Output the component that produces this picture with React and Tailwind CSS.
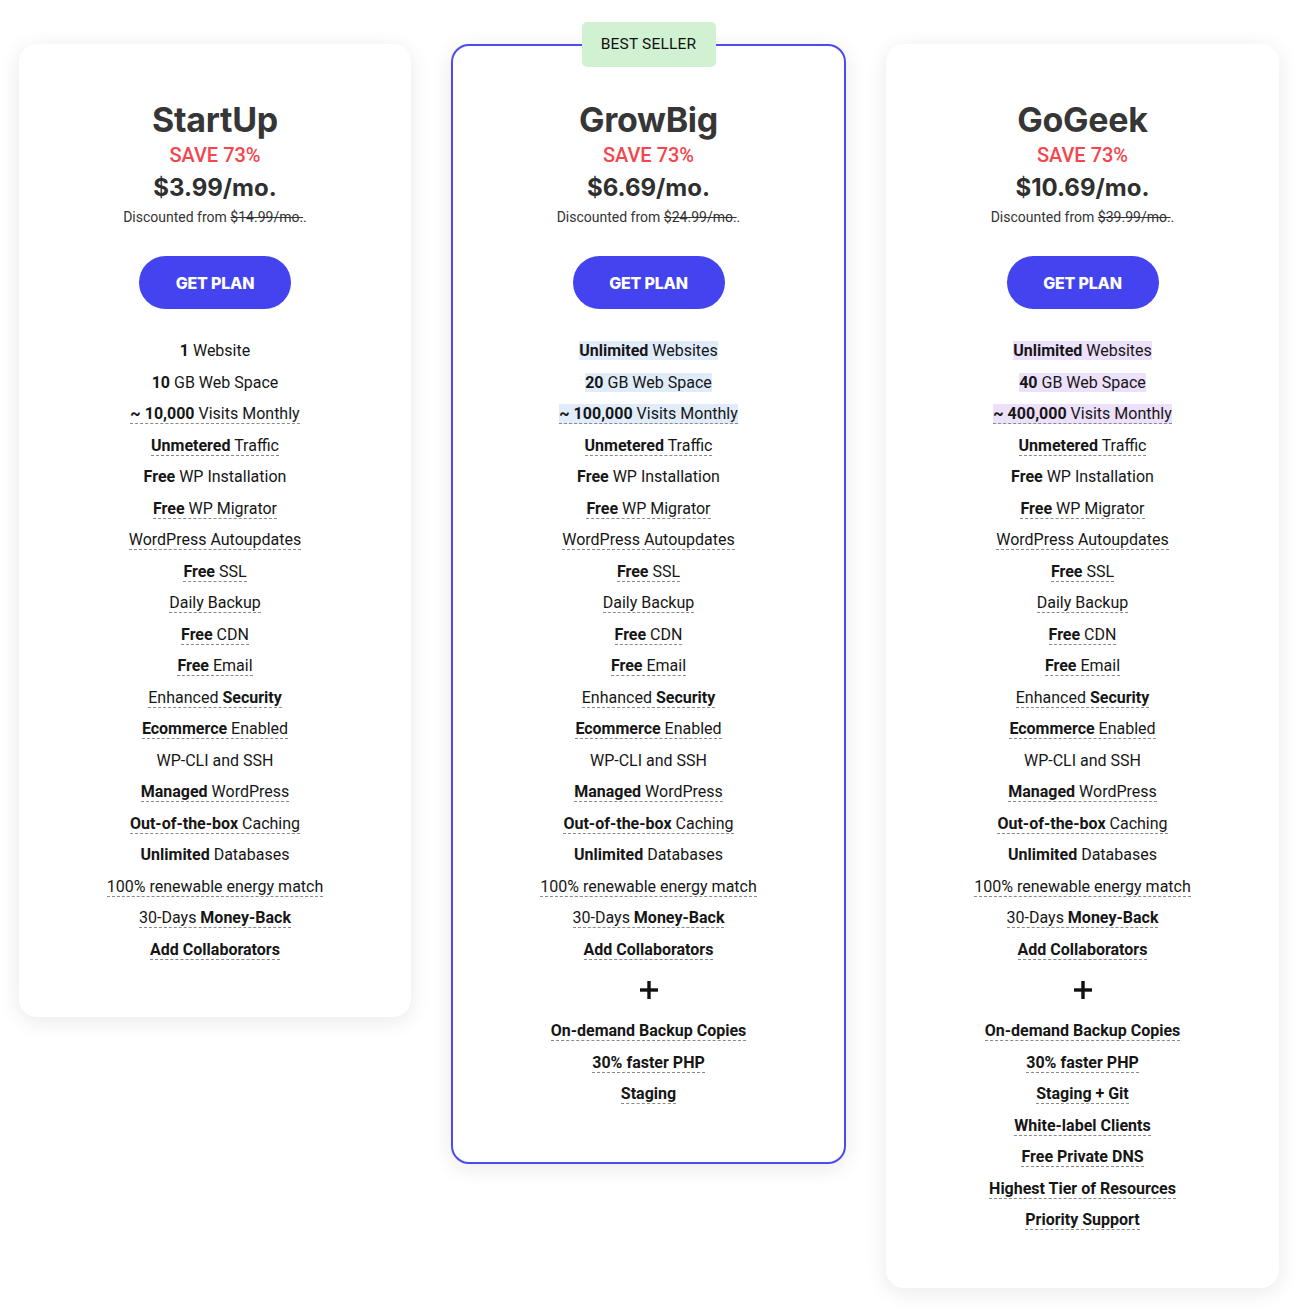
import React from 'react';

const base = [
  { t: '**1** Website' },
  { t: '**10** GB Web Space' },
  { t: '**~ 10,000** Visits Monthly', u: true },
  { t: '**Unmetered** Traffic', u: true },
  { t: '**Free** WP Installation' },
  { t: '**Free** WP Migrator', u: true },
  { t: 'WordPress Autoupdates', u: true },
  { t: '**Free** SSL', u: true },
  { t: 'Daily Backup', u: true },
  { t: '**Free** CDN', u: true },
  { t: '**Free** Email', u: true },
  { t: 'Enhanced **Security**', u: true },
  { t: '**Ecommerce** Enabled', u: true },
  { t: 'WP-CLI and SSH' },
  { t: '**Managed** WordPress', u: true },
  { t: '**Out-of-the-box** Caching', u: true },
  { t: '**Unlimited** Databases' },
  { t: '100% renewable energy match', u: true },
  { t: '30-Days **Money-Back**', u: true },
  { t: '**Add Collaborators**', u: true },
];

function withTop(top) {
  return [...top, ...base.slice(3)];
}

const plans = [
  {
    name: 'StartUp',
    price: '$3.99/mo.',
    old: '$14.99/mo.',
    width: 'w-[392px]',
    features: base,
    extras: [],
  },
  {
    name: 'GrowBig',
    price: '$6.69/mo.',
    old: '$24.99/mo.',
    width: 'w-[395px]',
    featured: true,
    hl: 'bg-[#e1ecfb]',
    features: withTop([
      { t: '**Unlimited** Websites', h: true },
      { t: '**20** GB Web Space', h: true },
      { t: '**~ 100,000** Visits Monthly', u: true, h: true },
    ]),
    extras: ['On-demand Backup Copies', '30% faster PHP', 'Staging'],
  },
  {
    name: 'GoGeek',
    price: '$10.69/mo.',
    old: '$39.99/mo.',
    width: 'w-[393px]',
    hl: 'bg-[#ede0fa]',
    features: withTop([
      { t: '**Unlimited** Websites', h: true },
      { t: '**40** GB Web Space', h: true },
      { t: '**~ 400,000** Visits Monthly', u: true, h: true },
    ]),
    extras: [
      'On-demand Backup Copies',
      '30% faster PHP',
      'Staging + Git',
      'White-label Clients',
      'Free Private DNS',
      'Highest Tier of Resources',
      'Priority Support',
    ],
  },
];

function Rich({ text }) {
  const parts = text.split('**');
  return parts.map((p, i) =>
    i % 2 === 1 ? <b key={i} className="font-bold">{p}</b> : <React.Fragment key={i}>{p}</React.Fragment>
  );
}

function Feature({ item, hl }) {
  const cls = [
    item.u ? 'border-b border-dashed border-[#8a8a8a]' : '',
    item.h ? hl : '',
  ].join(' ');
  return (
    <li className="h-[31.5px] leading-[31.5px]">
      <span className={cls}>
        <Rich text={item.t} />
      </span>
    </li>
  );
}

function Card({ plan }) {
  return (
    <div
      className={`relative ${plan.width} shrink-0 rounded-[18px] bg-white text-center pt-[56px] pb-[52px] shadow-[0_4px_22px_rgba(0,0,0,0.09)] ${
        plan.featured ? 'border-2 border-[#4b4bef]' : ''
      }`}
    >
      {plan.featured && (
        <div className="absolute left-1/2 -translate-x-1/2 top-[-24px] w-[134px] h-[45px] rounded-[5px] bg-[#d0f2d3] flex items-center justify-center text-[15.5px] text-[#111] tracking-[0.2px]">
          BEST SELLER
        </div>
      )}
      <h2 className={`font-['Inter'] font-bold text-[34px] leading-[40px] text-[#363636] tracking-[-0.3px] ${plan.featured ? '-mt-[2px]' : ''}`}>
        {plan.name}
      </h2>
      <div className="mt-[2px] text-[20px] leading-[26px] font-medium text-[#f4464f]">SAVE 73%</div>
      <div className="mt-[4px] font-['Inter'] font-bold text-[24px] leading-[32px] text-[#2f2f2f]">{plan.price}</div>
      <div className="mt-[3px] text-[14px] leading-[20px] text-[#333]">
        Discounted from <span className="line-through">{plan.old}</span>.
      </div>
      <button className="mt-[29px] w-[152px] h-[53px] rounded-full bg-[#4343ef] text-white font-['Inter'] font-extrabold text-[16px] tracking-[-0.2px]">
        GET PLAN
      </button>
      <ul className="mt-[26px] text-[16px] text-[#161616]">
        {plan.features.map((f, i) => (
          <Feature key={i} item={f} hl={plan.hl} />
        ))}
      </ul>
      {plan.extras.length > 0 && (
        <>
          <div className="h-[50px] flex items-center justify-center">
            <svg width="18" height="18" viewBox="0 0 18 18">
              <rect x="7.3" y="0" width="3.4" height="18" fill="#111" />
              <rect x="0" y="7.3" width="18" height="3.4" fill="#111" />
            </svg>
          </div>
          <ul className="text-[16px] text-[#161616]">
            {plan.extras.map((e, i) => (
              <Feature key={i} item={{ t: `**${e}**`, u: true }} hl={plan.hl} />
            ))}
          </ul>
        </>
      )}
    </div>
  );
}

export default function App() {
  return (
    <div className="min-h-[1315px] bg-white font-['Roboto',sans-serif]">
      <div className="flex items-start gap-10 pl-[19px] pt-[44px]">
        {plans.map((p) => (
          <Card key={p.name} plan={p} />
        ))}
      </div>
    </div>
  );
}
